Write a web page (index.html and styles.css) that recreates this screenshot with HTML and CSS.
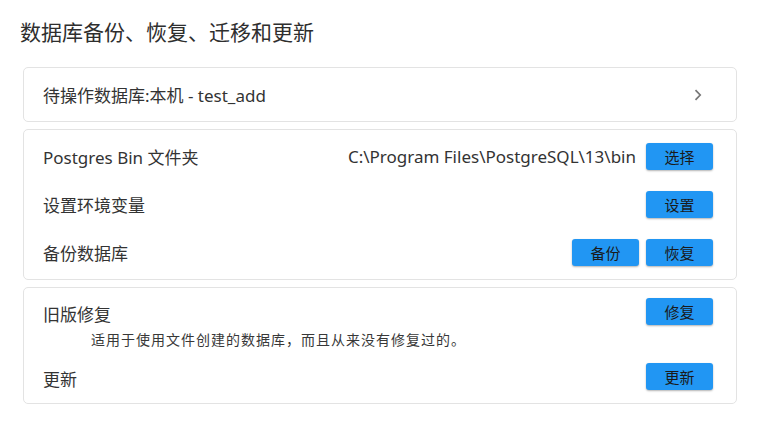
FILE: index.html
```html
<!DOCTYPE html>
<html lang="zh-CN">
<head>
<meta charset="utf-8">
<title>数据库备份、恢复、迁移和更新</title>
<link rel="stylesheet" href="styles.css">
</head>
<body>
<div class="page">
  <h1 class="title">数据库备份、恢复、迁移和更新</h1>

  <div class="card nav-card">
    <span class="label">待操作数据库:本机 - test_add</span>
    <svg class="chev" width="8" height="12" viewBox="0 0 8 12"><path d="M1.5 1.2 L6.2 6 L1.5 10.8" fill="none" stroke="#777777" stroke-width="1.7"/></svg>
  </div>

  <div class="card list-card">
    <div class="row">
      <span class="label">Postgres Bin 文件夹</span>
      <div class="actions">
        <span class="path">C:\Program Files\PostgreSQL\13\bin</span>
        <button class="btn">选择</button>
      </div>
    </div>
    <div class="row">
      <span class="label">设置环境变量</span>
      <div class="actions"><button class="btn">设置</button></div>
    </div>
    <div class="row">
      <span class="label">备份数据库</span>
      <div class="actions"><button class="btn">备份</button><button class="btn">恢复</button></div>
    </div>
  </div>

  <div class="card misc-card">
    <div class="row small">
      <span class="label low">旧版修复</span>
      <div class="actions"><button class="btn">修复</button></div>
    </div>
    <div class="desc">适用于使用文件创建的数据库，而且从来没有修复过的。</div>
    <div class="row small">
      <span class="label low">更新</span>
      <div class="actions"><button class="btn">更新</button></div>
    </div>
  </div>
</div>
</body>
</html>
```

FILE: styles.css
```css
html, body {
  margin: 0;
  padding: 0;
  background: #ffffff;
}
body {
  font-family: "Noto Sans", "Noto Sans CJK SC", sans-serif;
  color: #333333;
}
.page {
  padding: 18px 23px 0 23px;
}
.title {
  margin: 0 0 21px -3px;
  font-size: 21px;
  line-height: 28px;
  font-weight: 400;
  color: #2e2e2e;
}
.card {
  border: 1px solid #e3e3e3;
  border-radius: 5px;
  background: #fff;
  box-sizing: border-box;
}
.nav-card {
  height: 55px;
  display: flex;
  align-items: center;
  justify-content: space-between;
  padding: 0 34px 0 19px;
}
.label {
  font-size: 17px;
  color: #333333;
}
.chev {
  display: block;
}
.list-card {
  margin-top: 7px;
  padding: 2px 23px 3px 19px;
}
.row {
  height: 48px;
  display: flex;
  align-items: center;
  justify-content: space-between;
}
.actions {
  display: flex;
  align-items: center;
  gap: 7px;
}
.path {
  font-size: 17px;
  color: #333333;
  margin-right: 3px;
}
.btn {
  width: 67px;
  height: 27px;
  border: none;
  border-radius: 3px;
  background: #2196f3;
  color: #1a1a1a;
  font-family: "Noto Sans CJK SC", sans-serif;
  font-size: 15px;
  padding: 0;
  box-shadow: 0 1px 2px rgba(0,0,0,0.3);
}
.misc-card {
  margin-top: 7px;
  padding: 8px 23px 12px 19px;
}
.row.small {
  height: 30px;
}
.label.low {
  padding-top: 4px;
}
.desc {
  height: 20px;
  line-height: 20px;
  margin: 4px 0 11px 0;
  padding-left: 48px;
  font-size: 14px;
  letter-spacing: 1px;
  color: #383838;
}
```
